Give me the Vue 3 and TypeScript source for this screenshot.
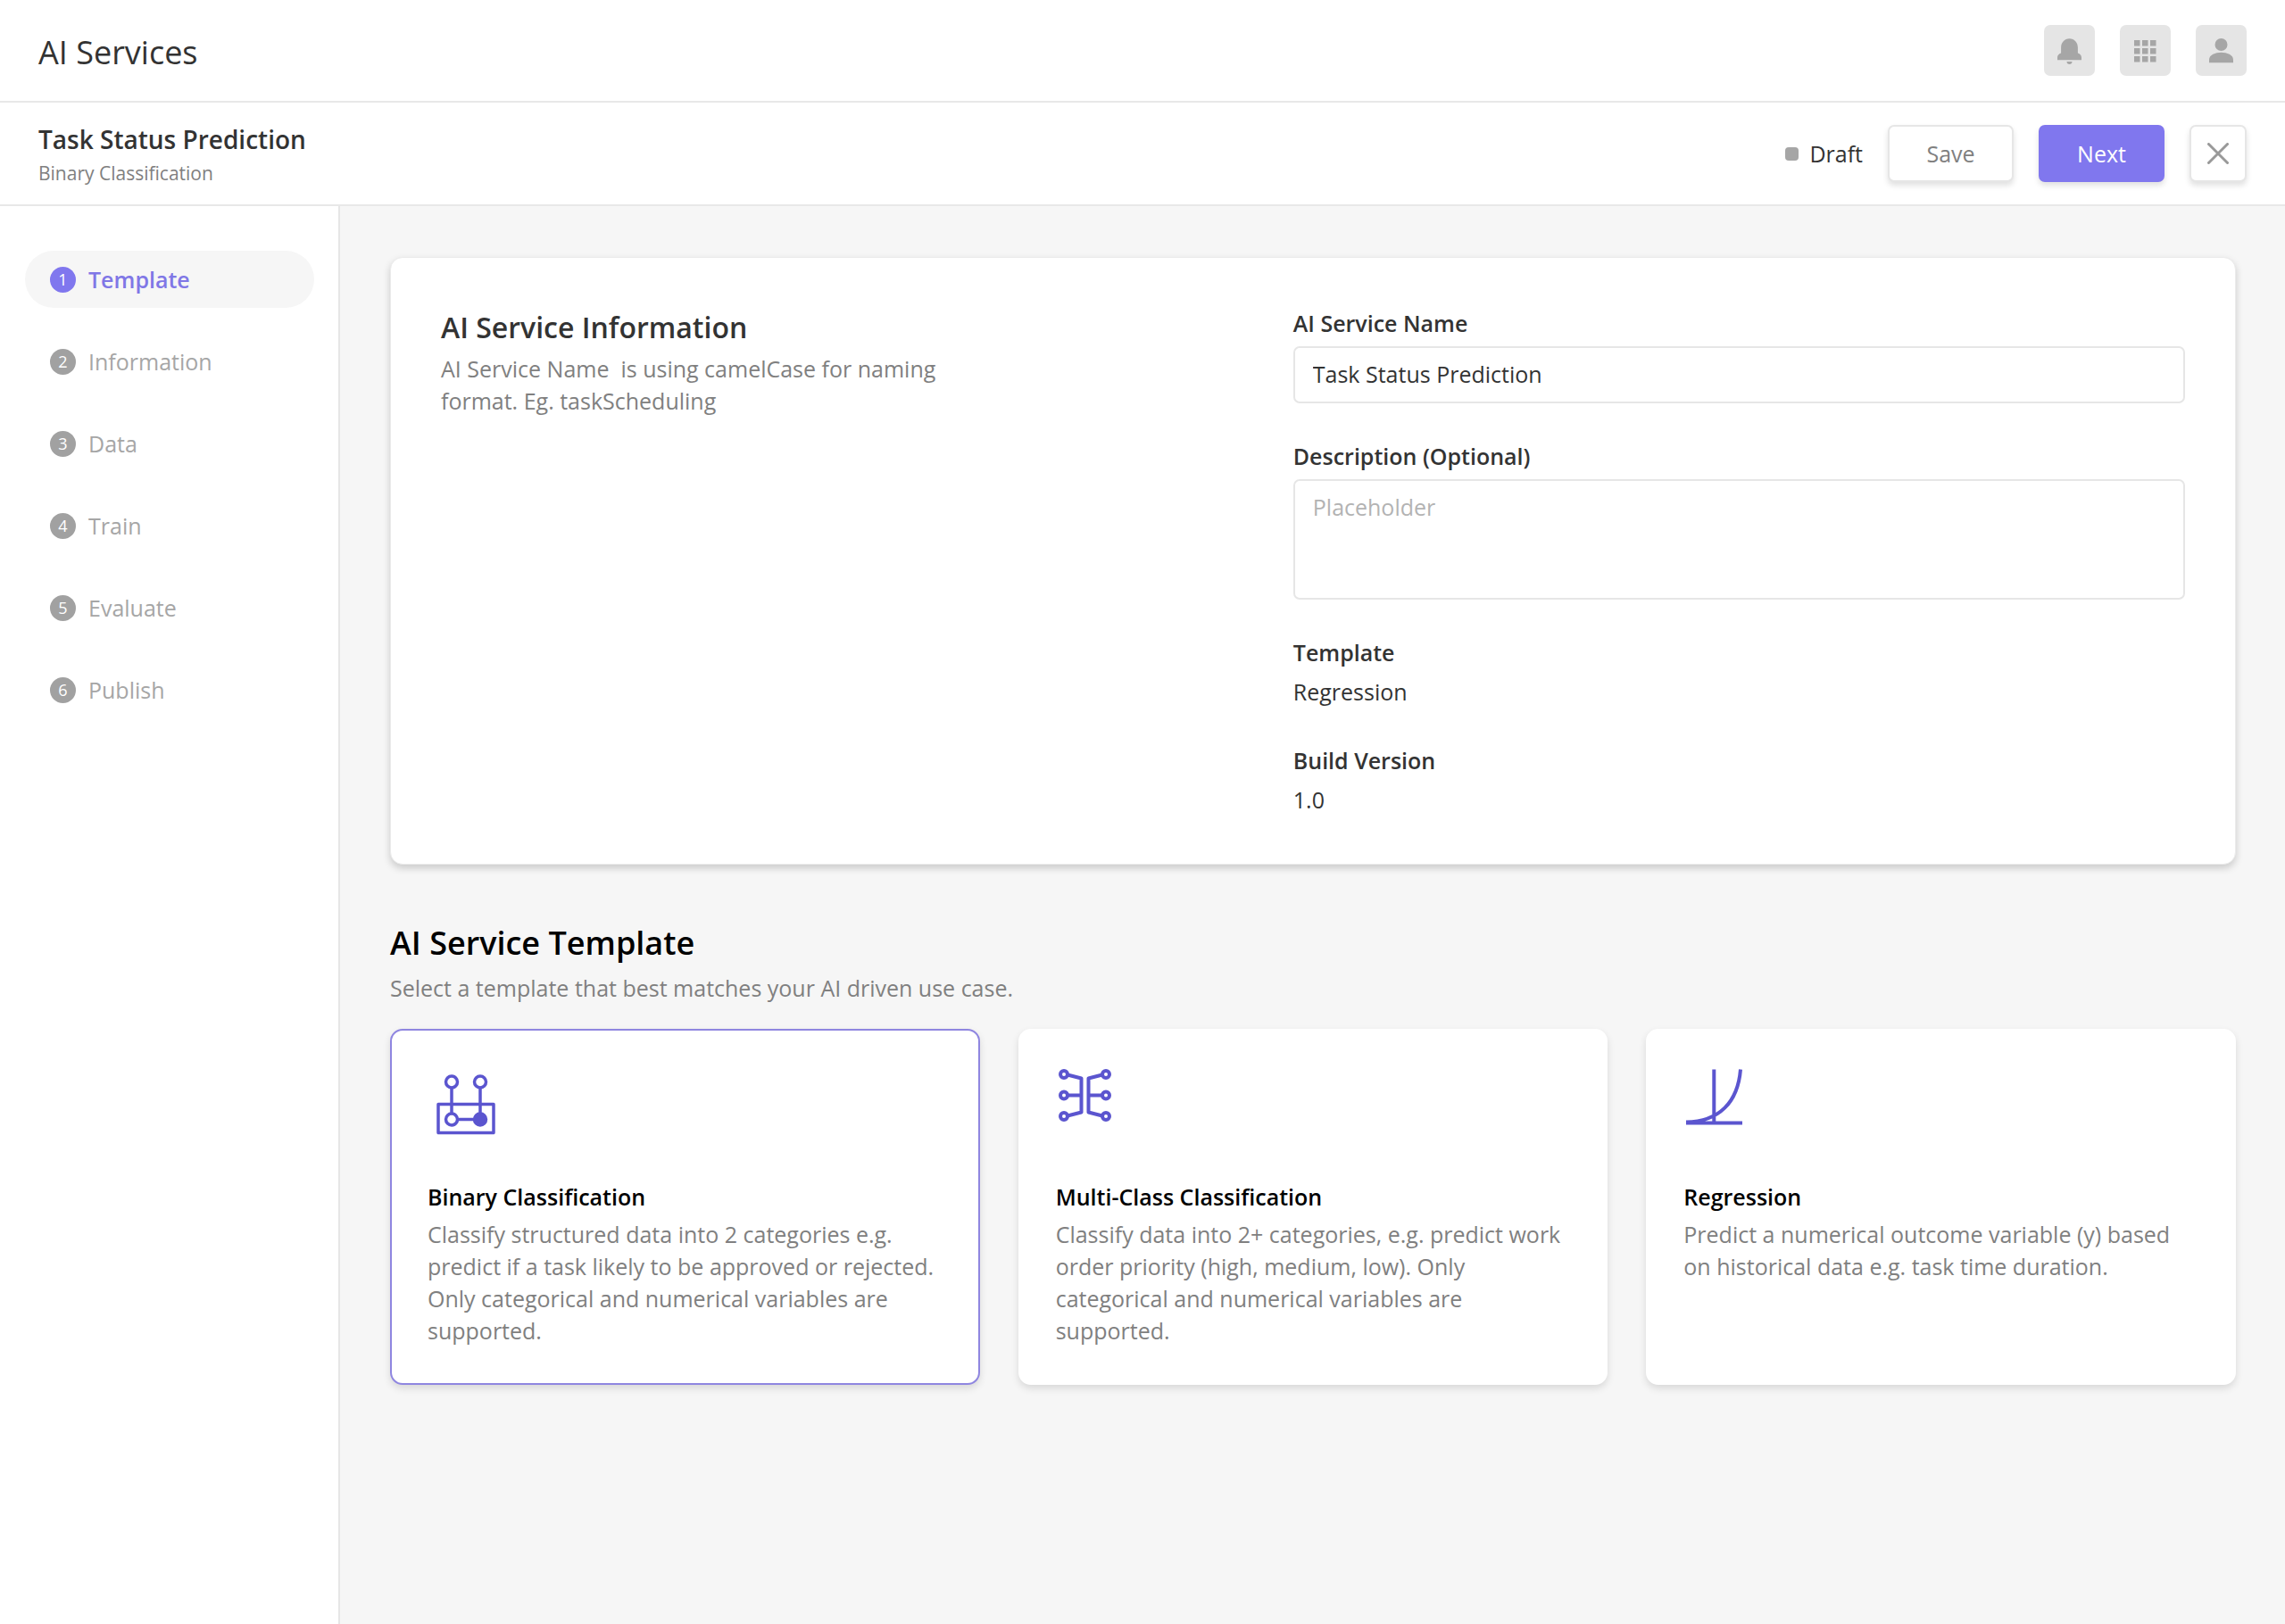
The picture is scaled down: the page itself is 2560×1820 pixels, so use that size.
<script setup lang="ts">
import { ref } from 'vue'

interface Step {
  id: number
  label: string
}

interface Template {
  id: 'binary' | 'multi' | 'regression'
  title: string
  text: string
}

const steps: Step[] = [
  { id: 1, label: 'Template' },
  { id: 2, label: 'Information' },
  { id: 3, label: 'Data' },
  { id: 4, label: 'Train' },
  { id: 5, label: 'Evaluate' },
  { id: 6, label: 'Publish' },
]

const templates: Template[] = [
  {
    id: 'binary',
    title: 'Binary Classification',
    text: 'Classify structured data into 2 categories e.g. predict if a task likely to be approved or rejected. Only categorical and numerical variables are supported.',
  },
  {
    id: 'multi',
    title: 'Multi-Class Classification',
    text: 'Classify data into 2+ categories, e.g. predict work order priority (high, medium, low). Only categorical and numerical variables are supported.',
  },
  {
    id: 'regression',
    title: 'Regression',
    text: 'Predict a numerical outcome variable (y) based on historical data e.g. task time duration.',
  },
]

const activeStep = ref<number>(1)
const serviceName = ref<string>('Task Status Prediction')
const description = ref<string>('')
const selected = ref<Template['id']>('binary')
</script>

<template>
  <div class="app">
    <header class="topbar">
      <span class="brand">AI Services</span>
      <div class="tools">
        <button type="button" class="tool" aria-label="Notifications">
          <svg viewBox="0 0 57 57" aria-hidden="true">
            <path d="M28.5 15.3c-5.6 0-9.4 4.4-9.4 10V31.5c-2.6 1-4.1 2.5-4.1 5v2.8h27v-2.8c0-2.5-1.5-4-4.1-5v-6.2c0-5.6-3.8-10-9.4-10z" />
            <path d="M25.5 41h6c0 1.900-1.200 3-3 3s-3-1.100-3-3z" />
          </svg>
        </button>
        <button type="button" class="tool" aria-label="Apps">
          <svg viewBox="0 0 57 57" aria-hidden="true">
            <template v-for="row in 3" :key="row">
              <rect v-for="col in 3" :key="col" :x="7 + col * 9" :y="8 + row * 9" width="6.5" height="6.5" />
            </template>
          </svg>
        </button>
        <button type="button" class="tool" aria-label="Account">
          <svg viewBox="0 0 57 57" aria-hidden="true">
            <circle cx="28.5" cy="22" r="7" />
            <path d="M15 42.3v-3.3c0-5.5 7-8.2 13.5-8.2s13.5 2.7 13.5 8.2v3.3z" />
          </svg>
        </button>
      </div>
    </header>

    <div class="taskbar">
      <div class="task">
        <h1>Task Status Prediction</h1>
        <p>Binary Classification</p>
      </div>
      <div class="actions">
        <span class="status"><i class="dot"></i>Draft</span>
        <button type="button" class="btn">Save</button>
        <button type="button" class="btn primary">Next</button>
        <button type="button" class="btn close" aria-label="Close">
          <svg viewBox="0 0 24 24" aria-hidden="true"><path d="M1.5 1.5l21 21M22.5 1.5l-21 21" /></svg>
        </button>
      </div>
    </div>

    <div class="body">
      <nav class="sidebar" aria-label="Steps">
        <a
          v-for="step in steps"
          :key="step.id"
          href="#"
          class="step"
          :class="{ active: step.id === activeStep }"
          @click.prevent="activeStep = step.id"
        >
          <span class="num">{{ step.id }}</span>{{ step.label }}
        </a>
      </nav>

      <main class="content">
        <section class="panel">
          <div class="intro">
            <h2>AI Service Information</h2>
            <p>AI Service Name&nbsp; is using camelCase for naming format. Eg. taskScheduling</p>
          </div>
          <div class="form">
            <div class="field">
              <label for="service-name">AI Service Name</label>
              <input id="service-name" v-model="serviceName" type="text" />
            </div>
            <div class="field">
              <label for="description">Description (Optional)</label>
              <textarea id="description" v-model="description" placeholder="Placeholder"></textarea>
            </div>
            <dl class="field">
              <dt>Template</dt>
              <dd>Regression</dd>
            </dl>
            <dl class="field">
              <dt>Build Version</dt>
              <dd>1.0</dd>
            </dl>
          </div>
        </section>

        <section class="chooser">
          <h2>AI Service Template</h2>
          <p class="lead">Select a template that best matches your AI driven use case.</p>
          <div class="cards" role="radiogroup" aria-label="AI Service Template">
            <label v-for="item in templates" :key="item.id" class="card" :class="{ selected: item.id === selected }">
              <input v-model="selected" type="radio" name="template" :value="item.id" />
              <svg v-if="item.id === 'binary'" viewBox="0 0 84 84" aria-hidden="true">
                <rect x="12" y="42.5" width="62" height="32" />
                <circle cx="27" cy="17.5" r="6.5" />
                <circle cx="59" cy="17.5" r="6.5" />
                <circle cx="27" cy="59.5" r="6.5" />
                <circle cx="59" cy="59.5" r="6.5" class="filled" />
                <path d="M27 24v29M59 24v29M33.5 59.5h20" />
              </svg>
              <svg v-else-if="item.id === 'multi'" viewBox="0 0 84 84" class="bold" aria-hidden="true">
                <circle cx="9" cy="9" r="4" />
                <circle cx="9" cy="32.5" r="4" />
                <circle cx="9" cy="56" r="4" />
                <circle cx="56" cy="9" r="4" />
                <circle cx="56" cy="32.5" r="4" />
                <circle cx="56" cy="56" r="4" />
                <path d="M13 9.5l15.5 4v38l-15.5 4M13 32.5h15.5M52 9.5l-15.5 4v38l15.5 4M52 32.5h-15.5" />
              </svg>
              <svg v-else viewBox="0 0 84 84" class="bold" aria-hidden="true">
                <path d="M3 63.5h63M34.3 3.5v60M3 62.5c37-.5 58-22 61-59" />
              </svg>
              <span class="card-title">{{ item.title }}</span>
              <span class="card-text">{{ item.text }}</span>
            </label>
          </div>
        </section>
      </main>
    </div>
  </div>
</template>

<style>
body {
  margin: 0;
  background: #f6f6f6;
}
</style>

<style scoped>
.app {
  display: flex;
  flex-direction: column;
  min-height: 100vh;
  font-family: 'Open Sans', 'Noto Sans', sans-serif;
  font-size: 25px;
  line-height: 36px;
  color: #333;
  background: #f6f6f6;
}

.app *,
.app {
  box-sizing: border-box;
}

h1,
h2,
p,
dl,
dd {
  margin: 0;
}

button,
input,
textarea {
  font: inherit;
  color: inherit;
}

.topbar,
.taskbar {
  display: flex;
  align-items: center;
  justify-content: space-between;
  padding: 0 43px;
  background: #fff;
  border-bottom: 2px solid #e8e8e8;
}

.topbar {
  height: 115px;
}

.taskbar {
  height: 116px;
}

.brand {
  padding-top: 4px;
  font-size: 36px;
  line-height: 48px;
}

.tools,
.actions {
  display: flex;
  align-items: center;
  gap: 28px;
}

.tool {
  width: 57px;
  height: 57px;
  padding: 0;
  border: 0;
  border-radius: 7px;
  background: #e5e5e5;
}

.tool svg {
  display: block;
  fill: #a6a6a6;
}

.task {
  padding-top: 4px;
}

.task h1 {
  font-size: 28px;
  font-weight: 600;
  line-height: 40px;
}

.task p {
  font-size: 21px;
  line-height: 36px;
  color: #808080;
}

.status {
  display: flex;
  align-items: center;
  gap: 12px;
}

.dot {
  width: 15px;
  height: 15px;
  border-radius: 4px;
  background: #a6a6a6;
}

.btn {
  display: flex;
  align-items: center;
  justify-content: center;
  width: 141px;
  height: 64px;
  padding: 0;
  border: 2px solid #e6e6e6;
  border-radius: 7px;
  background: #fff;
  color: #808080;
  box-shadow: 0 4px 6px rgba(0, 0, 0, 0.12);
}

.btn.primary {
  border-color: #8077ee;
  background: #8077ee;
  color: #fff;
}

.btn.close {
  width: 64px;
}

.close svg {
  width: 24px;
  height: 24px;
  fill: none;
  stroke: #999;
  stroke-width: 3;
  stroke-linecap: round;
}

.body {
  display: flex;
  flex: 1;
}

.sidebar {
  display: flex;
  flex: none;
  flex-direction: column;
  gap: 28px;
  width: 381px;
  padding: 50px 27px 50px 28px;
  background: #fff;
  border-right: 2px solid #e6e6e6;
}

.step {
  display: flex;
  align-items: center;
  gap: 14px;
  height: 64px;
  padding: 0 28px;
  border-radius: 32px;
  color: #a6a6a6;
  text-decoration: none;
}

.step.active {
  background: #f6f6f6;
  color: #8077e6;
  font-weight: 600;
}

.num {
  display: flex;
  align-items: center;
  justify-content: center;
  width: 29px;
  height: 29px;
  border-radius: 50%;
  background: #a1a1a1;
  color: #fff;
  font-size: 18px;
  font-weight: 400;
  line-height: 28px;
}

.active .num {
  background: #8077ee;
}

.content {
  flex: 1;
  min-width: 0;
  padding: 57px 55px 57px 56px;
}

.panel {
  display: grid;
  grid-template-columns: 43fr 45fr;
  padding: 56px 56px 54px;
  border: 1px solid #ebebeb;
  border-radius: 14px;
  background: #fff;
  box-shadow: 0 4px 8px rgba(0, 0, 0, 0.18);
}

.intro p {
  max-width: 600px;
  margin-top: 6px;
  color: #808080;
}

.intro h2 {
  font-size: 32px;
  font-weight: 600;
  line-height: 44px;
}

.form {
  display: flex;
  flex-direction: column;
  gap: 42px;
}

.field {
  display: flex;
  flex-direction: column;
  gap: 9px;
}

.field label,
.field dt {
  font-weight: 600;
  line-height: 34px;
}

.field input,
.field textarea {
  display: block;
  width: 100%;
  padding: 11px 20px 13px;
  border: 2px solid #e6e6e6;
  border-radius: 7px;
  background: #fff;
  resize: none;
}

.field input {
  height: 64px;
}

.field textarea {
  height: 135px;
}

.field textarea::placeholder {
  color: #b3b3b3;
  opacity: 1;
}

.chooser {
  margin-top: 62px;
  color: #000;
}

.chooser h2 {
  font-size: 36px;
  font-weight: 600;
  line-height: 52px;
}

.lead {
  margin-top: 6px;
  color: #808080;
}

.cards {
  display: grid;
  grid-template-columns: repeat(3, 1fr);
  gap: 43px;
  margin-top: 28px;
}

.card {
  position: relative;
  display: flex;
  flex-direction: column;
  padding: 40px 40px 41px;
  border: 2px solid #fff;
  border-radius: 14px;
  background: #fff;
  box-shadow: 0 4px 8px rgba(0, 0, 0, 0.12);
}

.card.selected {
  border-color: #8f86e0;
}

.card input {
  position: absolute;
  opacity: 0;
}

.card svg {
  width: 84px;
  height: 84px;
  margin-bottom: 44px;
  fill: none;
  stroke: #5b55cf;
  stroke-width: 3.5;
  stroke-linejoin: round;
}

.card svg.bold {
  stroke-width: 4;
}

.card .filled {
  fill: #5b55cf;
}

.card-title {
  font-weight: 600;
}

.card-text {
  margin-top: 6px;
  color: #808080;
}
</style>
